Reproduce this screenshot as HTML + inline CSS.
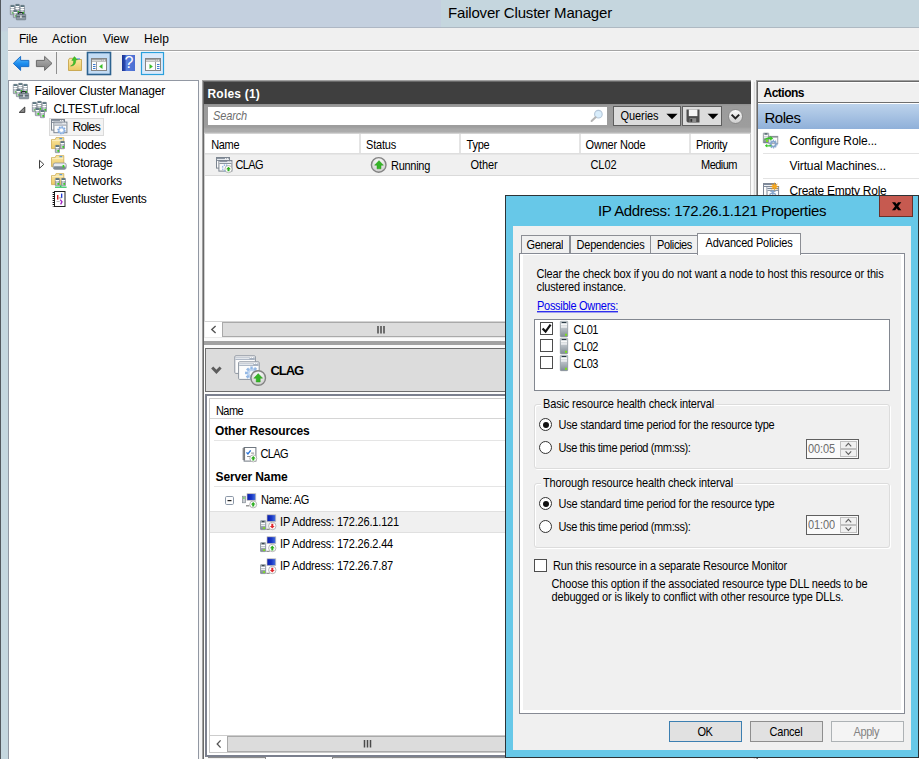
<!DOCTYPE html>
<html>
<head>
<meta charset="utf-8">
<title>Failover Cluster Manager</title>
<style>
*{box-sizing:border-box;margin:0;padding:0}
html,body{width:919px;height:759px;overflow:hidden;background:#f0f0f0}
body{position:relative;font-family:"Liberation Sans",sans-serif;font-size:11px;color:#000}
.a,.t{position:absolute}
.t{white-space:nowrap;line-height:14px;height:14px;font-size:11px;transform:scaleY(1.14);transform-origin:0 10.6px}
.u{font-size:12px;line-height:16px;height:16px;transform:none}
.n{transform:none}
.b{font-weight:bold}
svg{position:absolute;overflow:visible}
</style>
</head>
<body>
<!-- ===== main window chrome ===== -->
<div class="a" style="left:0;top:0;width:919px;height:28px;background:#c5d6de;border-bottom:1px solid #aeb9c2"></div>
<div class="a" style="left:0;top:0;width:441px;height:28px;background:#c4d0df;border-bottom:1px solid #aeb7c4"></div>
<div class="a" style="left:0;top:27px;width:8px;height:732px;background:linear-gradient(#c4d0df 0,#c4d0df 3px,#c5d7df 5px,#c5d7df 100%)"></div>
<div class="t n" style="letter-spacing:-0.184px;left:448px;top:4px;font-size:15px;line-height:18px;height:18px">Failover Cluster Manager</div>
<div class="a" style="left:8px;top:50px;width:911px;height:2px;background:#fff;border-top:1px solid #a5a5a5"></div>
<div class="t u" style="letter-spacing:-0.211px;left:19px;top:31px">File</div>
<div class="t u" style="letter-spacing:0.273px;left:52px;top:31px">Action</div>
<div class="t u" style="letter-spacing:-0.074px;left:103px;top:31px">View</div>
<div class="t u" style="letter-spacing:0.078px;left:144px;top:31px">Help</div>

<!-- ===== tree pane ===== -->
<div class="a" style="left:8px;top:80px;width:191px;height:690px;background:#fff;border:1px solid #9298a3"></div>
<div class="a" style="left:199px;top:80px;width:3px;height:690px;background:#f6f6f6"></div>
<div class="t u" style="letter-spacing:-0.176px;left:34.5px;top:83px">Failover Cluster Manager</div>
<div class="t u" style="letter-spacing:-0.155px;left:53.5px;top:101px">CLTEST.ufr.local</div>
<div class="a" style="left:49px;top:118px;width:55px;height:18px;background:#f3f3f3;border:1px solid #dadada"></div>
<div class="t u" style="letter-spacing:-0.637px;left:72.5px;top:119px">Roles</div>
<div class="t u" style="letter-spacing:-0.237px;left:72.5px;top:137px">Nodes</div>
<div class="t u" style="letter-spacing:-0.290px;left:72.5px;top:155px">Storage</div>
<div class="t u" style="letter-spacing:-0.064px;left:72.5px;top:173px">Networks</div>
<div class="t u" style="letter-spacing:-0.288px;left:72.5px;top:191px">Cluster Events</div>

<!-- ===== middle pane ===== -->
<div class="a" style="left:202px;top:80px;width:549px;height:690px;background:#a0a0a0"></div>
<div class="a" style="left:203px;top:81px;width:548px;height:690px;background:#696969"></div>
<div class="a" style="left:204px;top:82px;width:547px;height:690px;background:#fff"></div>
<div class="a" style="left:751px;top:80px;width:2px;height:690px;background:#fafafa"></div>
<div class="a" style="left:204px;top:82px;width:547px;height:22px;background:#3f3f3f"></div>
<div class="t u b" style="letter-spacing:0.201px;left:207.5px;top:86px;color:#fff">Roles (1)</div>
<div class="a" style="left:204px;top:104px;width:547px;height:30px;background:linear-gradient(#8f8f8f 0,#9b9b9b 2px,#9d9d9d 23px,#a9a9a9 25px,#adadad 28px,#e0e0e0 30px)"></div>
<div class="a" style="left:208px;top:107px;width:399px;height:18px;background:#fff"></div>
<div class="t" style="letter-spacing:-0.143px;left:213px;top:109px;font-style:italic;color:#6d6d6d">Search</div>

<!-- search toolbar buttons -->
<div class="a" style="left:613px;top:106px;width:68px;height:20px;background:#dcdcdc;border:1px solid #5e5e5e"></div>
<div class="t" style="letter-spacing:-0.076px;left:620.5px;top:109px">Queries</div>
<div class="a" style="left:682px;top:106px;width:40px;height:20px;background:#dcdcdc;border:1px solid #5e5e5e"></div>
<div class="a" style="left:728px;top:109px;width:15px;height:15px;border-radius:8px;background:linear-gradient(#fafafa,#cfcfcf);border:1px solid #8a8a8a"></div>
<!-- roles table -->
<div class="a" style="left:204px;top:134px;width:547px;height:20px;background:#fff;border-bottom:1px solid #dedede"></div>
<div class="a" style="left:359px;top:134px;width:2px;height:19px;background:#e4e4e4"></div>
<div class="a" style="left:459px;top:134px;width:2px;height:19px;background:#e4e4e4"></div>
<div class="a" style="left:579px;top:134px;width:2px;height:19px;background:#e4e4e4"></div>
<div class="a" style="left:689px;top:134px;width:2px;height:19px;background:#e4e4e4"></div>
<div class="t" style="letter-spacing:-0.336px;left:211.2px;top:138px">Name</div>
<div class="t" style="letter-spacing:-0.198px;left:366px;top:138px">Status</div>
<div class="t" style="letter-spacing:-0.215px;left:466.5px;top:138px">Type</div>
<div class="t" style="letter-spacing:-0.177px;left:585.5px;top:138px">Owner Node</div>
<div class="t" style="letter-spacing:-0.404px;left:696px;top:138px">Priority</div>
<div class="a" style="left:204px;top:154px;width:547px;height:22px;background:#f0f0f0;border-bottom:1px solid #dadada;border-top:1px solid #e6e6e6"></div>
<div class="t" style="letter-spacing:-0.617px;left:235.5px;top:158px">CLAG</div>
<div class="t" style="letter-spacing:-0.283px;left:391px;top:158.6px">Running</div>
<div class="t" style="letter-spacing:-0.103px;left:470.5px;top:158px">Other</div>
<div class="t" style="letter-spacing:-0.074px;left:590.5px;top:158px">CL02</div>
<div class="t" style="letter-spacing:-0.521px;left:701px;top:158px">Medium</div>
<div class="a" style="left:204px;top:134px;width:1px;height:204px;background:#cfcfcf"></div>
<div class="a" style="left:750px;top:134px;width:1px;height:214px;background:#c6c6c6"></div>
<div class="a" style="left:754px;top:82px;width:1px;height:690px;background:#dadada"></div>
<!-- top list h-scrollbar -->
<div class="a" style="left:204px;top:321px;width:547px;height:17px;background:#e9e9e9;border-top:1px solid #d4d4d4"></div>
<div class="a" style="left:205px;top:322px;width:17px;height:15px;background:#fff"></div>
<div class="a" style="left:222px;top:322px;width:400px;height:15px;background:#dcdcdc;border:1px solid #a9a9a9"></div>
<!-- splitter -->
<div class="a" style="left:204px;top:338px;width:547px;height:10px;background:#fbfbfb"></div>
<div class="a" style="left:204px;top:341px;width:547px;height:4px;background:#a2a2a2"></div>
<!-- detail header -->
<div class="a" style="left:205px;top:348px;width:545px;height:44px;background:#dcdcdc;border:1px solid #6e6e6e"></div>
<div class="t b n" style="letter-spacing:-1.086px;left:270.5px;top:363px;font-size:13px;line-height:16px;height:16px">CLAG</div>
<!-- detail list -->
<div class="a" style="left:204px;top:392px;width:547px;height:380px;background:#fbfbfb"></div>
<div class="a" style="left:205px;top:394px;width:545px;height:363px;background:#fff;border:2px solid #7b808e"></div>
<div class="a" style="left:209px;top:398px;width:540px;height:355px;border:1px solid #c8c8c8"></div>
<div class="a" style="left:210px;top:399px;width:539px;height:337px;background:#fff"></div>
<div class="a" style="left:210px;top:418px;width:539px;height:1px;background:#d5d5d5"></div>
<div class="t" style="letter-spacing:-0.586px;left:216px;top:403.6px">Name</div>
<div class="t b n" style="letter-spacing:-0.147px;left:215px;top:423.6px;font-size:12px">Other Resources</div>
<div class="a" style="left:214px;top:440px;width:535px;height:1px;background:#e5e5e5"></div>
<div class="t" style="letter-spacing:-0.617px;left:260.5px;top:447px">CLAG</div>
<div class="t b n" style="letter-spacing:-0.126px;left:215.5px;top:469.6px;font-size:12px">Server Name</div>
<div class="a" style="left:214px;top:486px;width:535px;height:1px;background:#e5e5e5"></div>
<div class="t" style="letter-spacing:-0.344px;left:261px;top:493px">Name: AG</div>
<div class="a" style="left:210px;top:511px;width:539px;height:22px;background:#f0f0f0;border-top:1px solid #e0e0e0;border-bottom:1px solid #e0e0e0"></div>
<div class="t" style="letter-spacing:-0.181px;left:280px;top:515px">IP Address: 172.26.1.121</div>
<div class="t" style="letter-spacing:-0.183px;left:280px;top:537px">IP Address: 172.26.2.44</div>
<div class="t" style="letter-spacing:-0.183px;left:280px;top:559px">IP Address: 172.26.7.87</div>
<div class="a" style="left:208px;top:757px;width:57px;height:2px;background:#f0f0f0;border-top:1px solid #8c8c8c"></div>
<div class="a" style="left:265px;top:757px;width:68px;height:2px;background:#fff;border-left:1px solid #8c8c8c;border-right:1px solid #8c8c8c"></div>
<div class="a" style="left:333px;top:757px;width:172px;height:2px;background:#f0f0f0;border-top:1px solid #8c8c8c"></div>
<!-- bottom list h-scrollbar -->
<div class="a" style="left:210px;top:735px;width:539px;height:17px;background:#e9e9e9;border-top:1px solid #cdcdcd"></div>
<div class="a" style="left:210px;top:736px;width:17px;height:16px;background:#fff"></div>
<div class="a" style="left:227px;top:736px;width:400px;height:16px;background:#dcdcdc;border:1px solid #a9a9a9"></div>

<!-- ===== actions pane ===== -->
<div class="a" style="left:756px;top:80px;width:170px;height:690px;background:#a0a0a0"></div>
<div class="a" style="left:757px;top:81px;width:170px;height:690px;background:#696969"></div>
<div class="a" style="left:758px;top:82px;width:170px;height:690px;background:#fff"></div>
<div class="a" style="left:758px;top:83px;width:161px;height:20px;background:#f0f0f0;border-bottom:1px solid #6e6e6e"></div>
<div class="t u b" style="letter-spacing:-0.502px;left:763.5px;top:85px">Actions</div>
<div class="a" style="left:758px;top:104px;width:161px;height:25px;background:linear-gradient(#bdd3ec,#8fb0d9)"></div>
<div class="t n" style="letter-spacing:-0.472px;left:764.5px;top:109px;font-size:15px;line-height:18px;height:18px">Roles</div>
<div class="t u" style="letter-spacing:-0.150px;left:789.5px;top:133px">Configure Role...</div>
<div class="a" style="left:763px;top:153px;width:156px;height:1px;background:#e3e3e3"></div>
<div class="t u" style="letter-spacing:-0.105px;left:789.5px;top:158px">Virtual Machines...</div>
<div class="a" style="left:763px;top:178px;width:156px;height:1px;background:#e3e3e3"></div>
<div class="t u" style="letter-spacing:-0.257px;left:789.5px;top:183px">Create Empty Role</div>

<svg class="a" style="left:0;top:0" width="919" height="759" viewBox="0 0 919 759">
<defs>
<linearGradient id="gBack" x1="0" y1="0" x2="0" y2="1"><stop offset="0" stop-color="#6cc4ff"/><stop offset=".5" stop-color="#1e8fef"/><stop offset="1" stop-color="#0c66d0"/></linearGradient>
<linearGradient id="gFwd" x1="0" y1="0" x2="0" y2="1"><stop offset="0" stop-color="#b4b4b4"/><stop offset="1" stop-color="#7c7c7c"/></linearGradient>
<linearGradient id="gFold" x1="0" y1="0" x2="0" y2="1"><stop offset="0" stop-color="#fbe9a9"/><stop offset="1" stop-color="#ecc963"/></linearGradient>
<linearGradient id="gHelp" x1="0" y1="0" x2="1" y2="0"><stop offset="0" stop-color="#1c3492"/><stop offset=".25" stop-color="#2d4cb4"/><stop offset=".3" stop-color="#5a7ede"/><stop offset="1" stop-color="#4c6fd2"/></linearGradient>
<linearGradient id="gSrv" x1="0" y1="0" x2="1" y2="0"><stop offset="0" stop-color="#9fa8b0"/><stop offset=".45" stop-color="#cfd5da"/><stop offset="1" stop-color="#8b959e"/></linearGradient>
<linearGradient id="gMon" x1="0" y1="0" x2="1" y2="0"><stop offset="0" stop-color="#0a1cae"/><stop offset=".5" stop-color="#1836c4"/><stop offset="1" stop-color="#4a74e2"/></linearGradient><linearGradient id="gTw" x1="0" y1="0" x2="0" y2="1"><stop offset="0" stop-color="#d4d9dd"/><stop offset=".5" stop-color="#aab2b9"/><stop offset="1" stop-color="#7c8790"/></linearGradient><radialGradient id="gBtn" cx=".5" cy=".3" r=".8"><stop offset="0" stop-color="#ffffff"/><stop offset="1" stop-color="#c4c4c4"/></radialGradient>
<g id="srv"><rect x=".3" y=".3" width="4.2" height="9.4" rx=".5" fill="url(#gSrv)" stroke="#76818a" stroke-width=".6"/><rect x="1" y=".6" width="2.8" height="1" fill="#15404e"/><rect x=".6" y="2" width="3.6" height="1" fill="#fff"/><rect x=".6" y="4" width="3.6" height="1" fill="#fff"/><rect x="2.4" y="7" width="1.6" height="1.8" fill="#35d21c"/></g>
<g id="srvS"><rect x=".3" y=".3" width="4.2" height="7.4" rx=".5" fill="url(#gSrv)" stroke="#76818a" stroke-width=".6"/><rect x="1" y=".6" width="2.8" height="1" fill="#15404e"/><rect x=".6" y="2" width="3.6" height="1" fill="#fff"/><rect x="2.4" y="5" width="1.6" height="1.8" fill="#35d21c"/></g>
<g id="clusterMgr"><use href="#srv" x="0" y="1"/><use href="#srv" x="5" y="0"/><use href="#srv" x="10" y="1"/><use href="#srvS" x="3" y="6"/><rect x="8.5" y="8.5" width="4.4" height="2.6" rx="1" fill="none" stroke="#20282e" stroke-width="1.1"/><rect x="6.3" y="10.2" width="9.4" height="5.6" rx=".5" fill="#8d9aa5" stroke="#5d6973" stroke-width=".6"/><rect x="6.5" y="12" width="9" height="1.2" fill="#5f6b75"/><rect x="10.3" y="11.4" width="1.3" height="2.6" fill="#f2f2f2"/></g>
<g id="cluster"><use href="#srv" x="0" y="1"/><use href="#srv" x="5" y="0"/><use href="#srv" x="10" y="1"/><use href="#srvS" x="3" y="7"/><use href="#srvS" x="8" y="9"/></g>
<g id="folder"><path d="M0.5 2.6 L4.2 2.6 L5 0.6 L12.8 0.6 L12.8 11.6 L0.5 11.6 Z" fill="url(#gFold)" stroke="#c9a445" stroke-width=".7"/><path d="M1 3.4 L12.2 3.4" stroke="#fdf3cf" stroke-width=".8"/><rect x="8.4" y="1.1" width="2.8" height="1.1" fill="#4a8fe0"/></g>
<g id="win"><rect x="0" y="0" width="13" height="10.6" fill="#fbfbfb" stroke="#7c8590" stroke-width="1"/><rect x=".5" y=".5" width="12" height="1" fill="#8c95a1"/><rect x=".5" y="1.5" width="12" height="1" fill="#e4e8ed"/><rect x=".5" y="2.5" width="12" height="1" fill="#8c95a1"/><rect x="8.6" y=".6" width="1.2" height="1.2" fill="#fff"/><rect x="10.6" y=".6" width="1.2" height="1.2" fill="#fff"/></g>
<g id="ipDown"><rect x="7" y=".4" width="8.8" height="6.8" fill="url(#gMon)" stroke="#c9c3b6" stroke-width=".7"/><rect x=".5" y="6.2" width="5.2" height="9" rx=".5" fill="url(#gTw)" stroke="#6f7a84" stroke-width=".6"/><rect x="1.6" y="6.8" width="3" height="1" fill="#1f2c34"/><rect x="1.1" y="8.6" width="4" height="1" fill="#fff"/><rect x="1.1" y="10.4" width="4" height="1" fill="#fff"/><rect x="3.2" y="12.8" width="1.8" height="1.8" fill="#7be01c"/><rect x="6.6" y="14.4" width="1" height="1" fill="#222"/><rect x="8.4" y="14.4" width="1" height="1" fill="#222"/><circle cx="12.3" cy="11.6" r="3.7" fill="#fff" stroke="#9a9a9a" stroke-width=".7"/></g>
</defs>
<rect x="0" y="0" width="1" height="759" fill="#53585e"/>
<!-- titlebar icon -->
<use href="#clusterMgr" x="10" y="4"/>
<!-- toolbar -->
<path d="M13.3 63.4 L20.6 56.4 L20.6 60.4 L28.8 60.4 L28.8 66.6 L20.6 66.6 L20.6 70.4 Z" fill="url(#gBack)" stroke="#1a6fc8" stroke-width="1" stroke-linejoin="round"/>
<path d="M52 63.4 L44.6 56.4 L44.6 60.4 L36.4 60.4 L36.4 66.6 L44.6 66.6 L44.6 70.4 Z" fill="url(#gFwd)" stroke="#6a6a6a" stroke-width="1" stroke-linejoin="round"/>
<rect x="56" y="52" width="1" height="22" fill="#8f8f8f"/>
<path d="M68.5 60 L68.5 70.5 L81.5 70.5 L81.5 59.5 L75.5 59.5 L74.8 58.3 L69.5 58.3 Z" fill="url(#gFold)" stroke="#c19d3f" stroke-width=".8"/>
<rect x="77" y="58.4" width="3" height="1" fill="#4a8fe0"/>
<path d="M70.6 66 C73.5 65 73.8 62.5 73.6 60.2 L71.8 60.4 L74.4 56.6 L77.4 59.8 L75.6 60 C76 63 74.5 66 70.6 66 Z" fill="#3fc62a" stroke="#2a9a1c" stroke-width=".5"/>
<rect x="87.5" y="52.5" width="23" height="22" fill="#c3dcf5" stroke="#2c628f" stroke-width="1.6"/>
<g transform="translate(91.5,58.5)"><rect x="0" y="0" width="15" height="12" fill="#fbfbfb" stroke="#858585" stroke-width="1"/><rect x=".5" y=".5" width="14" height="2.6" fill="#9a9a9a"/><rect x=".5" y="1.4" width="9.5" height=".9" fill="#e8e8e8"/><rect x="10.8" y="1.2" width="1.1" height="1.1" fill="#fff"/><rect x="12.6" y="1.2" width="1.1" height="1.1" fill="#fff"/><rect x="4.5" y="3.4" width="1" height="8.4" fill="#9a9a9a"/><rect x="1.5" y="5.5" width="2.5" height="1" fill="#3a78d0"/><rect x="1.5" y="7.5" width="2.5" height="1" fill="#3a78d0"/><rect x="1.5" y="9.5" width="2.5" height="1" fill="#3a78d0"/><path d="M11 5.4 L11 10.4 L7.6 7.9 Z" fill="#3bbf28"/></g>
<rect x="122" y="55" width="13" height="16" fill="url(#gHelp)"/>
<rect x="141.5" y="52.5" width="22" height="22" fill="#dbeafb" stroke="#2aa0dc" stroke-width="1.2"/>
<g transform="translate(145.5,58.5)"><rect x="0" y="0" width="15" height="12" fill="#fbfbfb" stroke="#858585" stroke-width="1"/><rect x=".5" y=".5" width="14" height="2.6" fill="#9a9a9a"/><rect x=".5" y="1.4" width="9.5" height=".9" fill="#e8e8e8"/><rect x="10.8" y="1.2" width="1.1" height="1.1" fill="#fff"/><rect x="12.6" y="1.2" width="1.1" height="1.1" fill="#fff"/><rect x="9.5" y="3.4" width="1" height="8.4" fill="#9a9a9a"/><rect x="11.5" y="5.5" width="2.5" height="1" fill="#3a78d0"/><rect x="11.5" y="7.5" width="2.5" height="1" fill="#3a78d0"/><rect x="11.5" y="9.5" width="2.5" height="1" fill="#3a78d0"/><path d="M4 5.4 L4 10.4 L7.4 7.9 Z" fill="#3bbf28"/></g>
<!-- tree icons -->
<use href="#clusterMgr" x="13" y="83"/>
<use href="#cluster" x="32" y="101"/>
<path d="M24.8 107 L24.8 112.4 L19.2 112.4 Z" fill="#8c8c8c" stroke="#303030" stroke-width=".9"/>
<g transform="translate(51.5,119.5)"><use href="#win" x="0" y="0"/><use href="#win" x="2.4" y="2.6"/><circle cx="10" cy="10.8" r="3.4" fill="#a9c6ea" stroke="#7fa8de" stroke-width="1.6" stroke-dasharray="1.5 1.1"/><circle cx="10" cy="10.8" r="1.7" fill="#fff"/></g>
<g transform="translate(51,137)"><use href="#folder"/><use href="#srvS" x="4" y="8"/><use href="#srvS" x="9" y="4"/></g>
<path d="M39.5 160.3 L39.5 168.3 L43.8 164.3 Z" fill="#fff" stroke="#404040" stroke-width="1"/>
<g transform="translate(51,155)"><use href="#folder"/><rect x="2.2" y="8" width="13" height="6.4" rx="2" fill="#e9ecef" stroke="#8a929a" stroke-width=".8"/><rect x="2.6" y="11.2" width="12.2" height="3" rx="1.2" fill="#7e8a94"/><rect x="11.6" y="10" width="1.6" height="2.6" fill="#35d21c"/></g>
<g transform="translate(51,173)"><use href="#folder"/><use href="#srvS" x="4" y="5"/><use href="#srvS" x="10" y="5"/><rect x="4" y="13.6" width="11.6" height="1.2" fill="#2fc25a"/><rect x="8.8" y="12.2" width="1.6" height="1.8" fill="#2fc25a"/></g>
<g transform="translate(52,191)"><rect x="2.5" y=".5" width="10.5" height="15" fill="#fff" stroke="#222" stroke-width="1"/><path d="M1.8 1 V15.4" stroke="#111" stroke-width="2.4" stroke-dasharray="1.1 .9"/><rect x="5" y="4" width="1.4" height="4.6" fill="#e02020"/><rect x="9" y="2.6" width="1.3" height="4.4" fill="#2038d8"/><path d="M8.2 8.6 L10 10.8 L8.6 13.4" stroke="#a020c0" stroke-width="1.3" fill="none"/><rect x="6.6" y="6.4" width="3" height="1" fill="#999"/><rect x="4.6" y="10" width="3" height="1" fill="#bbb"/></g>

<!-- role icon in table -->
<g transform="translate(216.5,157.5)"><use href="#win" x="0" y="0" transform="scale(1)"/><use href="#win" x="2.4" y="3"/><circle cx="9" cy="10.5" r="3" fill="none" stroke="#8fb4e2" stroke-width="1.4" stroke-dasharray="1.4 1"/><circle cx="12" cy="11.6" r="3.6" fill="#fff" stroke="#9a9a9a" stroke-width=".7"/><path d="M12 9.2 L14.4 11.8 L13 11.8 L13 13.8 L11 13.8 L11 11.8 L9.6 11.8 Z" fill="#2fae22"/></g>
<!-- status icon -->
<g id="statUp"><circle cx="378.7" cy="164.9" r="7.3" fill="url(#gBtn)" stroke="#838383" stroke-width="1.4"/><path d="M379 160.6 L383.4 165.2 L381 165.2 L381 168.8 L377 168.8 L377 165.2 L374.6 165.2 Z" fill="#35b427" stroke="#2a9a1c" stroke-width=".5"/></g>
<!-- magnifier -->
<circle cx="598.4" cy="114.2" r="3.8" fill="#d9edfb" stroke="#b4c6d8" stroke-width="1.1"/><path d="M595.6 117.2 L591.6 121" stroke="#b5b5b5" stroke-width="2" stroke-linecap="round"/>
<!-- dropdown arrows -->
<path d="M666.4 113.8 L677.6 113.8 L672 119.2 Z" fill="#000"/>
<path d="M707.6 113.8 L718.4 113.8 L713 119.2 Z" fill="#000"/>
<!-- floppy -->
<path d="M686.5 109.5 L699.5 109.5 L699.5 122.5 L687.8 122.5 L686.5 121.2 Z" fill="#4d4d4d"/><rect x="688.8" y="109.5" width="8.6" height="6.6" fill="#f4f4f4"/><rect x="689.6" y="118.2" width="6.6" height="4.3" fill="#8a8a8a"/><rect x="690.4" y="119" width="1.8" height="2.8" fill="#333"/>
<!-- round chevron -->
<path d="M731.6 114.6 L735.4 118.4 L739.2 114.6" fill="none" stroke="#222" stroke-width="2"/>
<!-- scrollbar arrows + grips -->
<path d="M215.6 326 L211.8 329.5 L215.6 333" fill="none" stroke="#555" stroke-width="1.4"/>
<path d="M378 326 v7.5 M381 326 v7.5 M384 326 v7.5" stroke="#4a4a4a" stroke-width="1.5"/>
<path d="M220.6 740.4 L217.2 744 L220.6 747.6" fill="none" stroke="#555" stroke-width="1.3"/>
<path d="M364.5 740 v7.5 M367.5 740 v7.5 M370.5 740 v7.5" stroke="#4a4a4a" stroke-width="1.5"/>
<!-- detail header chevron + icon -->
<path d="M212.2 367.4 L216.4 371.8 L220.6 367.4" fill="none" stroke="#5c5c5c" stroke-width="2.9"/>
<g transform="translate(234.8,355.8)"><rect x="0" y="0" width="20.6" height="17.6" rx="1" fill="#fcfcfc" stroke="#8d95a0" stroke-width="1"/><rect x=".6" y="1.6" width="19.4" height="2.6" fill="#a8b2c0"/><rect x=".6" y="2.4" width="14" height=".9" fill="#f2f4f7"/><rect x="15.4" y="1.2" width="1" height="1" fill="#fff"/><rect x="17.2" y="1.2" width="1" height="1" fill="#fff"/>
<rect x="3.8" y="6" width="20.6" height="17.6" rx="1" fill="#fcfcfc" stroke="#8d95a0" stroke-width="1"/><rect x="4.4" y="7.6" width="19.4" height="2.6" fill="#a8b2c0"/><rect x="4.4" y="8.4" width="14" height=".9" fill="#f2f4f7"/><rect x="19.2" y="7.2" width="1" height="1" fill="#fff"/><rect x="21" y="7.2" width="1" height="1" fill="#fff"/>
<circle cx="17" cy="17.4" r="5.4" fill="#bfd5f0" stroke="#93b7e4" stroke-width="2.8" stroke-dasharray="2.3 1.6"/><circle cx="17" cy="17.4" r="2.2" fill="#f4f8fc"/>
<circle cx="23.4" cy="22.2" r="7.3" fill="url(#gBtn)" stroke="#838383" stroke-width="1.4"/><path d="M23.4 17.8 L27.8 22.4 L25.4 22.4 L25.4 26.2 L21.4 26.2 L21.4 22.4 L19 22.4 Z" fill="#35b427" stroke="#2a9a1c" stroke-width=".5"/></g>
<!-- resource icons -->
<g transform="translate(242.5,447)"><rect x="1.6" y=".5" width="11.8" height="13.6" fill="#fff" stroke="#6f7780" stroke-width="1"/><path d="M0 2 h2.6 M0 4 h2.6 M0 6 h2.6 M0 8 h2.6 M0 10 h2.6 M0 12 h2.6" stroke="#4a4a4a" stroke-width="1"/><path d="M4 5.4 L5.4 7 L8.2 3.4" fill="none" stroke="#2a74d8" stroke-width="1.4"/><rect x="8.6" y="5.6" width="3" height="1" fill="#8a8a8a"/><rect x="4.6" y="9" width="3" height="1" fill="#8a8a8a"/><circle cx="10.8" cy="11.4" r="3.5" fill="#fff" stroke="#9a9a9a" stroke-width=".7"/><path d="M10.8 9 L13.2 11.6 L11.8 11.6 L11.8 13.6 L9.8 13.6 L9.8 11.6 L8.4 11.6 Z" fill="#2fae22"/></g>
<rect x="225.5" y="496.5" width="8" height="8" rx="1.2" fill="#fdfdfd" stroke="#8c98a8" stroke-width="1"/><rect x="227.5" y="500" width="4" height="1.2" fill="#222"/>
<g transform="translate(242,493.4)"><rect x="5" y=".3" width="8.8" height="6.6" fill="url(#gMon)" stroke="#c9c3b6" stroke-width=".7"/><rect x=".4" y="2.8" width="3.2" height="6.6" fill="#c9cdd2" stroke="#7a828a" stroke-width=".6"/><rect x="1.2" y="4" width="1.4" height="1.2" fill="#35d21c"/><rect x="4" y="12" width="3.4" height=".9" fill="#555"/><circle cx="11.2" cy="11" r="3.5" fill="#fff" stroke="#9a9a9a" stroke-width=".7"/><path d="M11.2 8.6 L13.6 11.2 L12.2 11.2 L12.2 13.2 L10.2 13.2 L10.2 11.2 L8.8 11.2 Z" fill="#2fae22"/></g>
<use href="#ipDown" x="260" y="514.4"/><path d="M272.3 528.6 L269.9 526 L271.3 526 L271.3 523.8 L273.3 523.8 L273.3 526 L274.7 526 Z" fill="#e0262c"/>
<use href="#ipDown" x="260" y="536.4"/><path d="M272.3 545.6 L274.7 548.2 L273.3 548.2 L273.3 550.4 L271.3 550.4 L271.3 548.2 L269.9 548.2 Z" fill="#2fae22"/>
<use href="#ipDown" x="260" y="558.4"/><path d="M272.3 572.6 L269.9 570 L271.3 570 L271.3 567.8 L273.3 567.8 L273.3 570 L274.7 570 Z" fill="#e0262c"/>
<!-- actions icons -->
<g><rect x="763.3" y="133.1" width="5.4" height="9.8" rx=".4" fill="url(#gTw)" stroke="#737e88" stroke-width=".6"/><rect x="764.6" y="133.5" width="2.8" height="1" fill="#16323c"/><rect x="764" y="134.9" width="4" height="1" fill="#fff"/><rect x="764" y="136.7" width="4" height="1" fill="#fff"/><rect x="768.8" y="136.3" width="9" height="7.4" fill="#fafafa" stroke="#8a8e96" stroke-width=".8"/><rect x="768.8" y="136" width="9" height="1.6" fill="#8a8e96"/><rect x="766" y="139.9" width="2.1" height="2.1" fill="#7be01c"/><path d="M763.6 140.6 C765.4 137.6 768.6 137 770.4 137.4 L770.2 135.8 L773.2 138.6 L770 140.8 L770.2 139.4 C768 139 765.8 139.4 763.6 140.6 Z" fill="#39c626"/><circle cx="773.3" cy="144.1" r="2.5" fill="none" stroke="#86a6cc" stroke-width="1.8"/><circle cx="773.3" cy="144.1" r="3.7" fill="none" stroke="#86a6cc" stroke-width="1.3" stroke-dasharray="1.3 1.05"/><path d="M764.9 145.8 L767.2 143.8 L767.2 145.2 L771.4 145.2 L771.4 146.6 L767.2 146.6 L767.2 147.6 Z" fill="#39c626"/></g>
<g><rect x="763.5" y="183.5" width="12" height="12" fill="#fcfcfc" stroke="#7f8795" stroke-width="1"/><rect x="764" y="184" width="11" height="1" fill="#7d8a9c"/><rect x="764" y="185" width="8" height="1" fill="#f0f2f5"/><rect x="764" y="186" width="11" height="1" fill="#7d8a9c"/><rect x="767" y="186.5" width="11.6" height="9" fill="#fcfcfc" stroke="#7f8795" stroke-width="1"/><rect x="767.5" y="187" width="10.6" height="1" fill="#e9edf2"/><rect x="767.5" y="188" width="10.6" height="1" fill="#7d8a9c"/><rect x="767.5" y="189" width="10.6" height="1" fill="#e9edf2"/><rect x="767.5" y="190" width="10.6" height="1" fill="#8d99ab"/><path d="M769.4 194.6 L775.6 190.6 M770.4 191 L776 194.6 M772.8 190.2 V195" stroke="#86a6cc" stroke-width="1.3"/><path d="M774.5 182.6 L775.3 185 L777.4 183.8 L776.2 185.9 L778.6 186.6 L776.2 187.3 L777.4 189.4 L775.3 188.2 L774.5 190.6 L773.7 188.2 L771.6 189.4 L772.8 187.3 L770.4 186.6 L772.8 185.9 L771.6 183.8 L773.7 185 Z" fill="#f6a81e" stroke="#e8920c" stroke-width=".3"/></g>
</svg>

<!-- ===== properties dialog ===== -->
<div class="a" style="left:505px;top:195px;width:414px;height:563px;background:#67c8e8;border:1px solid #2d3336"></div>
<div class="a" style="left:513px;top:226px;width:398px;height:524px;background:#f0f0f0"></div>
<div class="t n" style="letter-spacing:-0.363px;left:598px;top:201.8px;font-size:15px;line-height:18px;height:18px">IP Address: 172.26.1.121 Properties</div>
<div class="a" style="left:879px;top:196px;width:34px;height:21px;background:#c65a50;border:1px solid #6b302b;border-top:0"></div>
<!-- tabs -->
<div class="a" style="left:521px;top:235px;width:49px;height:19px;background:#f0f0f0;border:1px solid #8c8e94;border-bottom:0"></div>
<div class="a" style="left:570px;top:235px;width:81px;height:19px;background:#f0f0f0;border:1px solid #8c8e94;border-bottom:0"></div>
<div class="a" style="left:650px;top:235px;width:48px;height:19px;background:#f0f0f0;border:1px solid #8c8e94;border-bottom:0"></div>
<div class="t" style="letter-spacing:-0.377px;left:526.5px;top:238px">General</div>
<div class="t" style="letter-spacing:-0.195px;left:576.5px;top:238px">Dependencies</div>
<div class="t" style="letter-spacing:-0.363px;left:657px;top:238px">Policies</div>
<!-- tab page -->
<div class="a" style="left:519px;top:253px;width:386px;height:461px;background:#f0f0f0;border:1px solid #868a94;box-shadow:inset 3px 0 0 #fff,inset -3px 0 0 #fff,inset 0 -3px 0 #fff,inset 0 1px 0 #fff"></div>
<div class="a" style="left:697px;top:233px;width:104px;height:22px;background:#fff;border:1px solid #8c8e94;border-bottom:0"></div>
<div class="t" style="letter-spacing:-0.170px;left:705.5px;top:236px">Advanced Policies</div>
<div class="t" style="letter-spacing:-0.151px;left:536.5px;top:267px">Clear the check box if you do not want a node to host this resource or this</div>
<div class="t" style="letter-spacing:-0.117px;left:536.5px;top:280px">clustered instance.</div>
<div class="t" style="letter-spacing:-0.287px;left:537px;top:299px;color:#0000ee;text-decoration:underline">Possible Owners:</div>
<!-- owners list -->
<div class="a" style="left:534px;top:319px;width:356px;height:72px;background:#fff;border:1px solid #828790"></div>
<div class="a" style="left:540px;top:322px;width:13px;height:13px;background:#fff;border:1px solid #4d4d4d"></div>
<div class="a" style="left:540px;top:339px;width:13px;height:13px;background:#fff;border:1px solid #4d4d4d"></div>
<div class="a" style="left:540px;top:356px;width:13px;height:13px;background:#fff;border:1px solid #4d4d4d"></div>
<div class="t" style="letter-spacing:-0.449px;left:573.5px;top:323px">CL01</div>
<div class="t" style="letter-spacing:-0.449px;left:573.5px;top:340px">CL02</div>
<div class="t" style="letter-spacing:-0.449px;left:573.5px;top:357px">CL03</div>
<!-- group 1 -->
<div class="a" style="left:534px;top:404px;width:356px;height:65px;border:1px solid #dcdcdc;border-radius:3px;box-shadow:1px 1px 0 #fff, inset 1px 1px 0 #fff"></div>
<div class="a" style="left:541px;top:398px;width:175px;height:14px;background:#f0f0f0"></div>
<div class="t" style="letter-spacing:-0.141px;left:543px;top:397px">Basic resource health check interval</div>
<div class="a" style="left:539px;top:418px;width:13px;height:13px;border-radius:7px;background:#fff;border:1px solid #333"></div>
<div class="a" style="left:542.5px;top:421.5px;width:6px;height:6px;border-radius:3px;background:#111"></div>
<div class="t" style="letter-spacing:-0.236px;left:558.5px;top:418px">Use standard time period for the resource type</div>
<div class="a" style="left:539px;top:441px;width:13px;height:13px;border-radius:7px;background:#fff;border:1px solid #333"></div>
<div class="t" style="letter-spacing:-0.380px;left:558.5px;top:441px">Use this time period (mm:ss):</div>
<div class="a" style="left:806px;top:439px;width:53px;height:20px;background:#fafafa;border:1px solid #5f5f5f"></div>
<div class="t" style="letter-spacing:-0.106px;left:808px;top:442px;color:#6d6d6d">00:05</div>
<div class="a" style="left:840px;top:441px;width:17px;height:8px;background:#f0f0f0;border:1px solid #c0c0c0"></div>
<div class="a" style="left:840px;top:449px;width:17px;height:8px;background:#f0f0f0;border:1px solid #c0c0c0"></div>
<!-- group 2 -->
<div class="a" style="left:534px;top:483px;width:356px;height:65px;border:1px solid #dcdcdc;border-radius:3px;box-shadow:1px 1px 0 #fff, inset 1px 1px 0 #fff"></div>
<div class="a" style="left:541px;top:477px;width:194px;height:14px;background:#f0f0f0"></div>
<div class="t" style="letter-spacing:-0.161px;left:543px;top:476px">Thorough resource health check interval</div>
<div class="a" style="left:539px;top:497px;width:13px;height:13px;border-radius:7px;background:#fff;border:1px solid #333"></div>
<div class="a" style="left:542.5px;top:500.5px;width:6px;height:6px;border-radius:3px;background:#111"></div>
<div class="t" style="letter-spacing:-0.236px;left:558.5px;top:497px">Use standard time period for the resource type</div>
<div class="a" style="left:539px;top:520px;width:13px;height:13px;border-radius:7px;background:#fff;border:1px solid #333"></div>
<div class="t" style="letter-spacing:-0.380px;left:558.5px;top:520px">Use this time period (mm:ss):</div>
<div class="a" style="left:806px;top:515px;width:53px;height:20px;background:#fafafa;border:1px solid #5f5f5f"></div>
<div class="t" style="letter-spacing:-0.106px;left:808px;top:518px;color:#6d6d6d">01:00</div>
<div class="a" style="left:840px;top:517px;width:17px;height:8px;background:#f0f0f0;border:1px solid #c0c0c0"></div>
<div class="a" style="left:840px;top:525px;width:17px;height:8px;background:#f0f0f0;border:1px solid #c0c0c0"></div>
<!-- separate monitor -->
<div class="a" style="left:534px;top:559px;width:13px;height:13px;background:#fff;border:1px solid #4d4d4d"></div>
<div class="t" style="letter-spacing:-0.182px;left:553px;top:559px">Run this resource in a separate Resource Monitor</div>
<div class="t" style="letter-spacing:-0.163px;left:551.5px;top:577px">Choose this option if the associated resource type DLL needs to be</div>
<div class="t" style="letter-spacing:-0.157px;left:551.5px;top:590px">debugged or is likely to conflict with other resource type DLLs.</div>
<!-- buttons -->
<div class="a" style="left:669px;top:721px;width:73px;height:21px;background:#e1e1e1;border:1px solid #3c7fb1"></div>
<div class="a" style="left:750px;top:721px;width:73px;height:21px;background:#e1e1e1;border:1px solid #8e8e8e"></div>
<div class="a" style="left:831px;top:721px;width:73px;height:21px;background:#f4f4f4;border:1px solid #adb2b5"></div>
<div class="t" style="letter-spacing:-0.453px;left:697.5px;top:725px">OK</div>
<div class="t" style="letter-spacing:-0.208px;left:769.5px;top:725px">Cancel</div>
<div class="t" style="letter-spacing:-0.406px;left:853.5px;top:725px;color:#838383">Apply</div>

<div class="t n" style="left:123.5px;top:54px;width:11px;text-align:center;color:#fff;font-size:16px;line-height:18px;height:18px">?</div>
<svg class="a" style="left:0;top:0" width="919" height="759" viewBox="0 0 919 759">
<defs><linearGradient id="gTow" x1="0" y1="0" x2="0" y2="1"><stop offset="0" stop-color="#e9ecee"/><stop offset=".45" stop-color="#b9c0c6"/><stop offset="1" stop-color="#808b94"/></linearGradient>
<g id="tower"><rect x=".3" y=".3" width="7.4" height="15.4" rx=".6" fill="url(#gTow)" stroke="#7c868e" stroke-width=".6"/><rect x="1.6" y="1" width="4.8" height="1" fill="#2a3a44"/><rect x="1" y="3.2" width="6" height="1.1" fill="#fff"/><rect x="1" y="5.4" width="6" height="1.1" fill="#fff"/><rect x="5" y="12.8" width="2" height="2" fill="#7be01c"/></g></defs>
<path d="M892 202.2 L895.2 202.2 L901.3 210.2 L898.1 210.2 Z M898.1 202.2 L901.3 202.2 L895.2 210.2 L892 210.2 Z" fill="#000"/>
<path d="M542.6 328.4 L545.6 331.6 L550.6 324.6" fill="none" stroke="#111" stroke-width="2.2"/>
<use href="#tower" x="560" y="321"/><use href="#tower" x="560" y="338"/><use href="#tower" x="560" y="355"/>
<path d="M845.6 446.4 L848.4 443.4 L851.2 446.4" fill="none" stroke="#606060" stroke-width="1.1"/>
<path d="M845.6 451.4 L848.4 454.4 L851.2 451.4" fill="none" stroke="#606060" stroke-width="1.1"/>
<path d="M845.6 522.4 L848.4 519.4 L851.2 522.4" fill="none" stroke="#606060" stroke-width="1.1"/>
<path d="M845.6 527.4 L848.4 530.4 L851.2 527.4" fill="none" stroke="#606060" stroke-width="1.1"/>
</svg>

</body>
</html>
